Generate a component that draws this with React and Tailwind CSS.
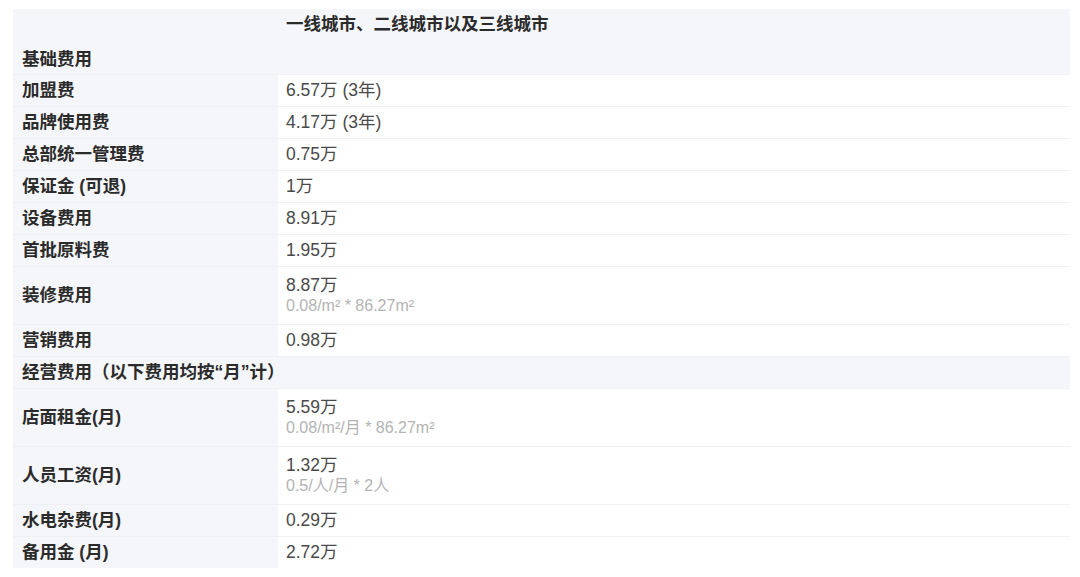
const rows = [
  { label: "加盟费", value: "6.57万 (3年)" },
  { label: "品牌使用费", value: "4.17万 (3年)" },
  { label: "总部统一管理费", value: "0.75万" },
  { label: "保证金 (可退)", value: "1万" },
  { label: "设备费用", value: "8.91万" },
  { label: "首批原料费", value: "1.95万" },
  { label: "装修费用", value: "8.87万", sub: "0.08/m² * 86.27m²" },
  { label: "营销费用", value: "0.98万" },
]

const monthly = [
  { label: "店面租金(月)", value: "5.59万", sub: "0.08/m²/月 * 86.27m²" },
  { label: "人员工资(月)", value: "1.32万", sub: "0.5/人/月 * 2人" },
  { label: "水电杂费(月)", value: "0.29万" },
  { label: "备用金 (月)", value: "2.72万" },
]

function Row({ label, value, sub }) {
  return (
    <div className="grid grid-cols-[265px_1fr] border-t border-[#eff0f4]">
      <div className="flex items-center pl-[9px] font-bold text-[#2b2b2b]">{label}</div>
      <div className={"bg-white pl-[8px] flex flex-col justify-center text-[#4a4a4a] " + (sub ? "h-[57px]" : "h-[31px]")}>
        <div className="leading-[21px]">{value}</div>
        {sub && <div className="text-[16px] leading-[20px] text-[#b3b3b3]">{sub}</div>}
      </div>
    </div>
  )
}

export default function App() {
  return (
    <div className="w-[1080px] h-[577px] bg-white pt-[9px] pl-[13px]" style={{ fontFamily: '"Liberation Sans", "Noto Sans CJK SC", sans-serif' }}>
      <div className="w-[1057px] bg-[#f5f6f9] text-[17.5px]">
        {/* header */}
        <div className="grid grid-cols-[265px_1fr] h-[33px]">
          <div />
          <div className="pl-[8px] pt-[5px] leading-[21px] font-bold text-[#2b2b2b]">一线城市、二线城市以及三线城市</div>
        </div>
        <div className="h-[32px] flex items-center pl-[9px] pt-[3px] font-bold text-[#2b2b2b]">基础费用</div>

        {rows.map((r) => (
          <Row key={r.label} {...r} />
        ))}

        <div className="h-[32px] flex items-center pl-[9px] font-bold text-[#2b2b2b] border-t border-[#eff0f4]">
          经营费用（以下费用均按“月”计）
        </div>

        {monthly.map((r) => (
          <Row key={r.label} {...r} />
        ))}
      </div>
    </div>
  )
}
